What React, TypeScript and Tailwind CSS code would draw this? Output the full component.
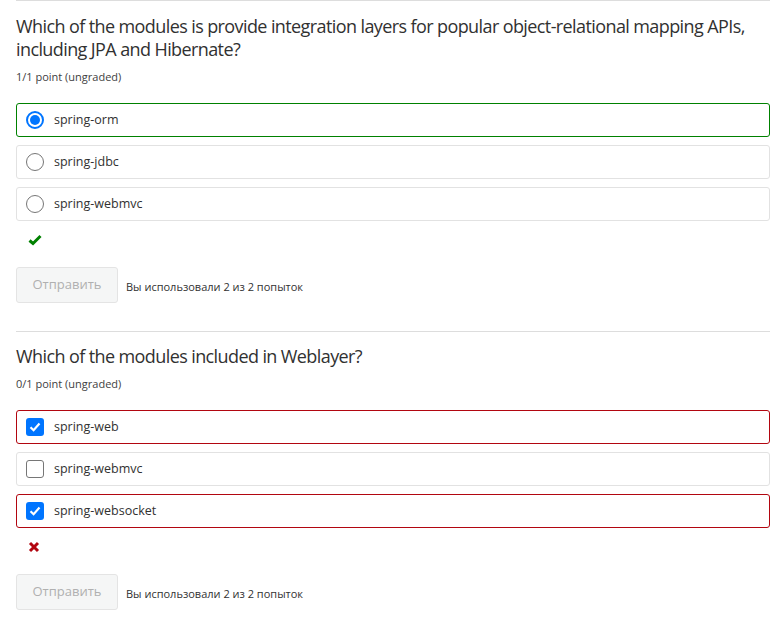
import React from 'react';

type Opt = { label: string; checked: boolean; state?: 'ok' | 'bad' };

const Radio = ({ checked }: { checked: boolean }) =>
  checked ? (
    <span className="w-[18px] h-[18px] rounded-full border-2 border-[#0075ff] flex items-center justify-center shrink-0">
      <span className="w-[10px] h-[10px] rounded-full bg-[#0075ff]" />
    </span>
  ) : (
    <span className="w-[18px] h-[18px] rounded-full border border-[#767676] shrink-0" />
  );

const Check = ({ checked }: { checked: boolean }) =>
  checked ? (
    <span className="w-[18px] h-[18px] rounded-[3px] bg-[#0075ff] flex items-center justify-center shrink-0">
      <svg width="14" height="14" viewBox="0 0 14 14">
        <path d="M2.5 7.2 L5.6 10.2 L11.5 3.6" fill="none" stroke="white" strokeWidth="2.2" />
      </svg>
    </span>
  ) : (
    <span className="w-[18px] h-[18px] rounded-[3px] border border-[#767676] shrink-0" />
  );

const Question = ({
  title,
  score,
  options,
  multi,
  correct,
  top,
}: {
  title: string;
  score: string;
  options: Opt[];
  multi?: boolean;
  correct: boolean;
  top: string;
}) => (
  <div className={top}>
    <h3 className="text-[18px] leading-[23px] tracking-[-0.6px] text-[#313131]">{title}</h3>
    <div className="text-[11px] text-[#414141] mt-[8px] leading-[16px]">{score}</div>
    <div className="mt-[18px] flex flex-col gap-[8px]">
      {options.map((o) => (
        <div
          key={o.label}
          className={`h-[34px] rounded-[3px] border flex items-center gap-[10px] pl-[9px] text-[12.5px] text-[#313131] ${
            o.state === 'ok'
              ? 'border-[#008100]'
              : o.state === 'bad'
              ? 'border-[#b20610]'
              : 'border-[#e2e2e2]'
          }`}
        >
          {multi ? <Check checked={o.checked} /> : <Radio checked={o.checked} />}
          <span>{o.label}</span>
        </div>
      ))}
    </div>
    <div className="h-[38px] flex items-center pl-[12px]">
      {correct ? (
        <svg width="14" height="12" viewBox="0 0 14 12">
          <path d="M1.5 6.5 L5 9.5 L12.5 2" fill="none" stroke="#008100" strokeWidth="3" />
        </svg>
      ) : (
        <svg width="12" height="12" viewBox="0 0 12 12">
          <path d="M2 2 L10 10 M10 2 L2 10" fill="none" stroke="#b20610" strokeWidth="3" />
        </svg>
      )}
    </div>
    <div className="flex items-center gap-[8px] mt-[8px]">
      <button className="w-[102px] h-[36px] rounded-[3px] border border-[#e4e4e4] bg-[#f5f6f6] text-[13px] text-[#b0b0b0]">
        Отправить
      </button>
      <span className="text-[11px] text-[#313131] mt-[5px]">Вы использовали 2 из 2 попыток</span>
    </div>
  </div>
);

export default function App() {
  return (
    <div className="w-[771px] h-[625px] bg-white overflow-hidden pl-[16px] pr-[1px] font-['Open_Sans',sans-serif]">
      <div className="border-t border-[#dddddd]">
        <Question
          top="pt-[14px]"
          title="Which of the modules is provide integration layers for popular object-relational mapping APIs, including JPA and Hibernate?"
          score="1/1 point (ungraded)"
          multi={false}
          correct
          options={[
            { label: 'spring-orm', checked: true, state: 'ok' },
            { label: 'spring-jdbc', checked: false },
            { label: 'spring-webmvc', checked: false },
          ]}
        />
      </div>
      <div className="border-t border-[#dddddd] mt-[28px]">
        <Question
          top="pt-[13px]"
          title="Which of the modules included in Weblayer?"
          score="0/1 point (ungraded)"
          multi
          correct={false}
          options={[
            { label: 'spring-web', checked: true, state: 'bad' },
            { label: 'spring-webmvc', checked: false },
            { label: 'spring-websocket', checked: true, state: 'bad' },
          ]}
        />
      </div>
    </div>
  );
}
